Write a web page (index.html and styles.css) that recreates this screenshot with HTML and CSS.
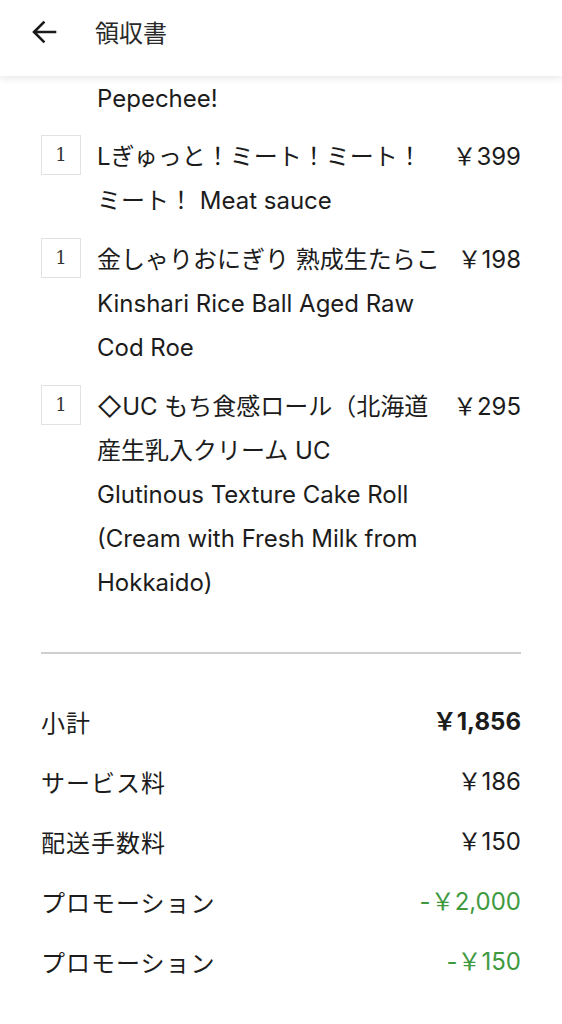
FILE: index.html
```html
<!DOCTYPE html>
<html lang="ja">
<head>
<meta charset="utf-8">
<title>領収書</title>
<link rel="stylesheet" href="styles.css">
</head>
<body>
<header class="topbar">
  <svg class="back" width="26" height="26" viewBox="0 0 26 26" aria-hidden="true">
    <path d="M24 13H3.5M12.5 3.5L3 13l9.5 9.5" fill="none" stroke="#1a1a1a" stroke-width="2.6" stroke-linecap="square"/>
  </svg>
  <h1 class="title">領収書</h1>
</header>
<main class="content">
  <div class="cont-line">Pepechee!</div>
  <ul class="items">
    <li class="item">
      <span class="qty">1</span>
      <span class="name"><span class="ln">Lぎゅっと！ミート！ミート！</span><span class="ln">ミート！ Meat sauce</span></span>
      <span class="price">￥399</span>
    </li>
    <li class="item">
      <span class="qty">1</span>
      <span class="name"><span class="ln">金しゃりおにぎり 熟成生たらこ</span><span class="ln">Kinshari Rice Ball Aged Raw</span><span class="ln">Cod Roe</span></span>
      <span class="price">￥198</span>
    </li>
    <li class="item">
      <span class="qty">1</span>
      <span class="name"><span class="ln">◇UC もち食感ロール（北海道</span><span class="ln">産生乳入クリーム UC</span><span class="ln">Glutinous Texture Cake Roll</span><span class="ln">(Cream with Fresh Milk from</span><span class="ln">Hokkaido)</span></span>
      <span class="price">￥295</span>
    </li>
  </ul>
  <hr class="divider">
  <dl class="summary">
    <div class="row"><dt>小計</dt><dd class="strong">￥1,856</dd></div>
    <div class="row"><dt>サービス料</dt><dd>￥186</dd></div>
    <div class="row"><dt>配送手数料</dt><dd>￥150</dd></div>
    <div class="row"><dt>プロモーション</dt><dd class="promo">-￥2,000</dd></div>
    <div class="row"><dt>プロモーション</dt><dd class="promo">-￥150</dd></div>
  </dl>
</main>
</body>
</html>
```

FILE: styles.css
```css
html, body {
  margin: 0;
  padding: 0;
  background: #ffffff;
}
body {
  font-family: "Inter", "Noto Sans CJK JP", sans-serif;
  color: #1c1c1c;
  font-size: 24px;
  width: 562px;
  height: 1024px;
  overflow: hidden;
}
.topbar {
  height: 76px;
  display: flex;
  align-items: center;
  padding-left: 31px;
  padding-bottom: 13px;
  box-sizing: border-box;
  background: #fff;
  box-shadow: 0 2px 8px rgba(0, 0, 0, 0.10);
  position: relative;
  z-index: 2;
}
.back {
  display: block;
}
.title {
  margin: 0 0 0 38px;
  font-family: "Noto Sans CJK JP", sans-serif;
  font-weight: 400;
  font-size: 24px;
  color: #2a2a2a;
}
.content {
  padding: 1px 41px 0 41px;
}
.cont-line {
  padding-left: 56px;
  line-height: 44px;
}
.items {
  list-style: none;
  margin: 0;
  padding: 0;
}
.item {
  display: grid;
  grid-template-columns: 40px 1fr auto;
  column-gap: 16px;
  margin-top: 15px;
  line-height: 44px;
}
.item:first-child {
  margin-top: 14px;
}
.qty {
  box-sizing: border-box;
  width: 40px;
  height: 40px;
  border: 1px solid #e2e2e2;
  display: flex;
  align-items: center;
  justify-content: center;
  font-family: "DejaVu Serif", "Liberation Serif", serif;
  font-size: 18px;
  color: #333;
  line-height: 1;
}
.name {
  display: flex;
  flex-direction: column;
  white-space: nowrap;
}
.ln {
  display: block;
}
.price {
  text-align: right;
}
.divider {
  margin: 47px 0 0 0;
  border: 0;
  height: 2px;
  background: #cfcfcf;
}
.summary {
  margin: 46px 0 0 0;
  display: flex;
  flex-direction: column;
  gap: 16px;
}
.row {
  display: flex;
  justify-content: space-between;
  line-height: 44px;
}
.row dt {
  font-family: "Noto Sans CJK JP", sans-serif;
  letter-spacing: 1px;
}
.row dd {
  margin: 0;
}
.strong {
  font-weight: 700;
}
.promo {
  color: #3f9a3f;
}
```
